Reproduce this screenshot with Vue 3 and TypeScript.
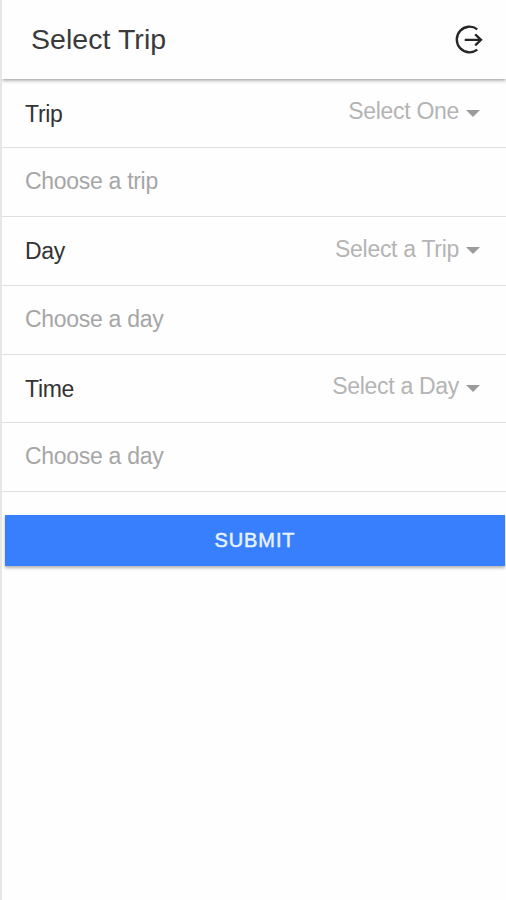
<script setup lang="ts">
interface Field {
  label: string
  value: string
  hint: string
}

const fields: Field[] = [
  { label: 'Trip', value: 'Select One', hint: 'Choose a trip' },
  { label: 'Day', value: 'Select a Trip', hint: 'Choose a day' },
  { label: 'Time', value: 'Select a Day', hint: 'Choose a day' },
]
</script>

<template>
  <div class="page">
    <header class="toolbar">
      <h1 class="title">Select Trip</h1>
      <button class="exit" type="button" aria-label="Log out">
        <svg width="30" height="30" viewBox="0 0 30 30" fill="none" stroke="#262626" stroke-width="2.3">
          <path d="M23.3 4.3A12.8 12.8 0 1 0 23.3 24.7" />
          <path d="M10.7 14.8H27M21.2 9.3L27 14.8L21.2 20.3" />
        </svg>
      </button>
    </header>
    <main>
      <template v-for="field in fields" :key="field.label">
        <div class="row">
          <span class="label">{{ field.label }}</span>
          <span class="select">
            <span class="value">{{ field.value }}</span>
            <svg class="caret" width="14" height="7" viewBox="0 0 14 7"><path d="M0 0H14L7 7Z" fill="#9b9b9b" /></svg>
          </span>
        </div>
        <div class="row hint">{{ field.hint }}</div>
      </template>
      <button class="submit" type="button">SUBMIT</button>
    </main>
  </div>
</template>

<style>
body {
  margin: 0;
  background: #fefefe;
}
</style>

<style scoped>
.page {
  box-sizing: border-box;
  height: 900px;
  border-left: 2px solid #e6e6e6;
  background: #fefefe;
  font-family: "Liberation Sans", Arial, sans-serif;
  overflow: hidden;
}
.toolbar {
  box-sizing: border-box;
  height: 79px;
  display: flex;
  align-items: center;
  justify-content: space-between;
  padding: 1px 22px 0 29px;
  box-shadow: 0 1px 4px rgba(0, 0, 0, 0.45);
}
.title {
  margin: 0;
  padding-bottom: 1px;
  font-size: 28.5px;
  font-weight: 400;
  letter-spacing: 0.05px;
  color: #3a3a3a;
}
.exit {
  display: flex;
  padding: 0;
  border: 0;
  background: none;
}
.row {
  box-sizing: border-box;
  height: 68.85px;
  display: flex;
  align-items: center;
  justify-content: space-between;
  padding: 0 26px 1px 23px;
  border-bottom: 1.5px solid #dfdfdf;
  font-size: 23px;
  letter-spacing: -0.3px;
  color: #333;
}
.row:first-child {
  height: 69px;
}
.label {
  padding-top: 3px;
}
.hint {
  color: #a6a6a6;
}
.select {
  display: flex;
  align-items: center;
  gap: 7px;
  color: #b4b4b4;
  padding-bottom: 2px;
}
.caret {
  margin-top: 3px;
}
.submit {
  display: block;
  width: calc(100% - 4px);
  height: 51px;
  margin: 23px 1px 0 3px;
  padding: 0;
  border: 0;
  background: #387ffe;
  color: #e8f2ff;
  font: 400 20px "Liberation Sans", Arial, sans-serif;
  -webkit-text-stroke: 0.5px #e8f2ff;
  letter-spacing: 0.9px;
  box-shadow: 0 2px 3px rgba(0, 0, 0, 0.3);
}
</style>
